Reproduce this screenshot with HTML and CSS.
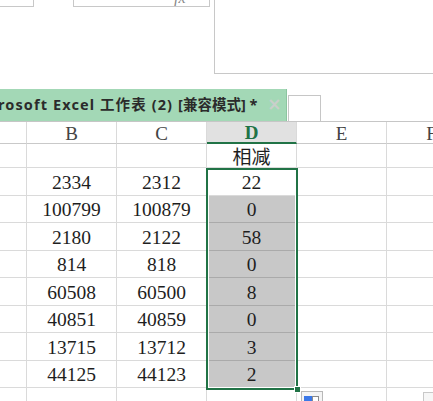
FILE: index.html
```html
<!DOCTYPE html>
<html>
<head>
<meta charset="utf-8">
<link rel="stylesheet" href="styles.css">
</head>
<body>
<div class="page">
  <div class="top">
    <div class="box box-name"></div>
    <div class="box box-fx"><span class="fx">fx</span></div>
    <div class="box box-edit"></div>
  </div>
  <div class="tabbar">
    <div class="tab"><span class="tab-title">rosoft Excel 工作表 (2)</span><span class="tab-mode">[兼容模式] *</span><span class="tab-close">×</span></div>
    <div class="newtab"></div>
  </div>
  <div class="sheet">
    <div class="grid">
      <div class="c h"></div><div class="c h">B</div><div class="c h">C</div><div class="c h hd">D</div><div class="c h">E</div><div class="c h">F</div>

      <div class="c"></div><div class="c"></div><div class="c"></div><div class="c cjk">相减</div><div class="c"></div><div class="c"></div>

      <div class="c"></div><div class="c">2334</div><div class="c">2312</div><div class="c sel-w">22</div><div class="c"></div><div class="c"></div>
      <div class="c"></div><div class="c">100799</div><div class="c">100879</div><div class="c sel">0</div><div class="c"></div><div class="c"></div>
      <div class="c"></div><div class="c">2180</div><div class="c">2122</div><div class="c sel">58</div><div class="c"></div><div class="c"></div>
      <div class="c"></div><div class="c">814</div><div class="c">818</div><div class="c sel">0</div><div class="c"></div><div class="c"></div>
      <div class="c"></div><div class="c">60508</div><div class="c">60500</div><div class="c sel">8</div><div class="c"></div><div class="c"></div>
      <div class="c"></div><div class="c">40851</div><div class="c">40859</div><div class="c sel">0</div><div class="c"></div><div class="c"></div>
      <div class="c"></div><div class="c">13715</div><div class="c">13712</div><div class="c sel">3</div><div class="c"></div><div class="c"></div>
      <div class="c"></div><div class="c">44125</div><div class="c">44123</div><div class="c sel">2</div><div class="c"></div><div class="c"></div>
      <div class="c"></div><div class="c"></div><div class="c"></div><div class="c"></div><div class="c"></div><div class="c"></div>
    </div>
    <div class="selection"></div>
    <div class="handle"></div>
    <div class="paste"><span class="paste-blue"></span><span class="paste-white"></span></div>
    <div class="quick"></div>
  </div>
</div>
</body>
</html>
```

FILE: styles.css
```css
html, body {
  margin: 0;
  padding: 0;
  background: #ffffff;
}
.page {
  width: 433px;
  height: 401px;
  overflow: hidden;
  position: relative;
  font-family: "Liberation Serif", serif;
}
.top {
  height: 89px;
  display: flex;
  align-items: flex-start;
}
.box {
  box-sizing: border-box;
  border: 1px solid #c8c8c8;
  border-top: none;
}
.box-name {
  width: 34px;
  height: 7px;
  border-left: none;
}
.box-fx {
  width: 137px;
  height: 7px;
  margin-left: 39px;
  position: relative;
  overflow: hidden;
}
.fx {
  position: absolute;
  left: 100px;
  top: -11px;
  font-family: "Liberation Serif", serif;
  font-style: italic;
  font-size: 16px;
  color: #888;
}
.box-edit {
  flex: 1;
  height: 74px;
  margin-left: 4px;
  border-right: none;
}
.tabbar {
  height: 33px;
  box-sizing: border-box;
  border-bottom: 1px solid #c6c6c6;
  display: flex;
  align-items: flex-end;
}
.tab {
  width: 287px;
  height: 32px;
  box-sizing: border-box;
  background: #a3d8b6;
  border-right: 1px solid #8cc5a0;
  display: flex;
  align-items: center;
  padding-bottom: 3px;
  font-family: "Noto Sans", "Noto Sans CJK SC", sans-serif;
  font-weight: bold;
  font-size: 14.5px;
  color: #2b2b2b;
  white-space: nowrap;
  overflow: hidden;
}
.tab-title {
  margin-left: -2px;
  letter-spacing: 1.1px;
  flex-shrink: 0;
}
.tab-mode {
  margin-left: 5px;
  letter-spacing: 0;
  flex-shrink: 0;
}
.tab-close {
  margin-left: 10px;
  color: #c9cfcb;
  font-family: "DejaVu Sans", sans-serif;
  font-size: 17px;
  font-weight: bold;
  flex-shrink: 0;
}
.newtab {
  width: 33px;
  height: 26px;
  box-sizing: border-box;
  margin-left: 1px;
  border: 1px solid #c6c6c6;
  border-bottom: none;
  background: #fff;
}
.sheet {
  position: relative;
}
.grid {
  display: grid;
  grid-template-columns: 27px 90px 90px 90px 90px 90px;
  grid-template-rows: 22px 24px repeat(8, 27.5px) 30px;
  width: 477px;
}
.c {
  box-sizing: border-box;
  border-right: 1px solid #dadada;
  border-bottom: 1px solid #dadada;
  display: flex;
  align-items: center;
  justify-content: center;
  font-family: "Liberation Serif", serif;
  font-size: 19.5px;
  color: #1e1e1e;
  padding-top: 3px;
}
.h {
  font-size: 19px;
  color: #444;
  border-bottom: 1px solid #c9c9c9;
  padding-top: 2px;
}
.hd {
  background: #e1e1e1;
  color: #217346;
  font-weight: bold;
  border-bottom: 2px solid #217346;
}
.cjk {
  font-family: "Noto Sans CJK SC", sans-serif;
  font-size: 19px;
  padding-top: 0;
}
.sel {
  background: #c8c8c8;
  border-bottom: 1px solid #aaaaaa;
}
.sel-w {
  background: #ffffff;
}
.selection {
  position: absolute;
  left: 206px;
  top: 46px;
  width: 92px;
  height: 222px;
  box-sizing: border-box;
  border: 2px solid #217346;
  box-shadow: inset 0 0 0 1px #ffffff;
}
.handle {
  position: absolute;
  left: 294px;
  top: 264px;
  width: 7px;
  height: 7px;
  background: #217346;
  border: 1px solid #ffffff;
  box-sizing: border-box;
}
.paste {
  position: absolute;
  left: 301px;
  top: 269px;
  width: 22px;
  height: 14px;
  box-sizing: border-box;
  border: 1px solid #b8b8b8;
  background: #f4f4f4;
  display: flex;
  padding: 4px 2px;
}
.paste-blue {
  width: 8px;
  height: 6px;
  background: #3b78e7;
}
.paste-white {
  width: 7px;
  height: 6px;
  box-sizing: border-box;
  border: 1px solid #8a8a8a;
  background: #fff;
}
.quick {
  position: absolute;
  left: 423px;
  top: 270px;
  width: 14px;
  height: 14px;
  box-sizing: border-box;
  border: 1px solid #c8c8c8;
  background: #f6f6f6;
}
```
